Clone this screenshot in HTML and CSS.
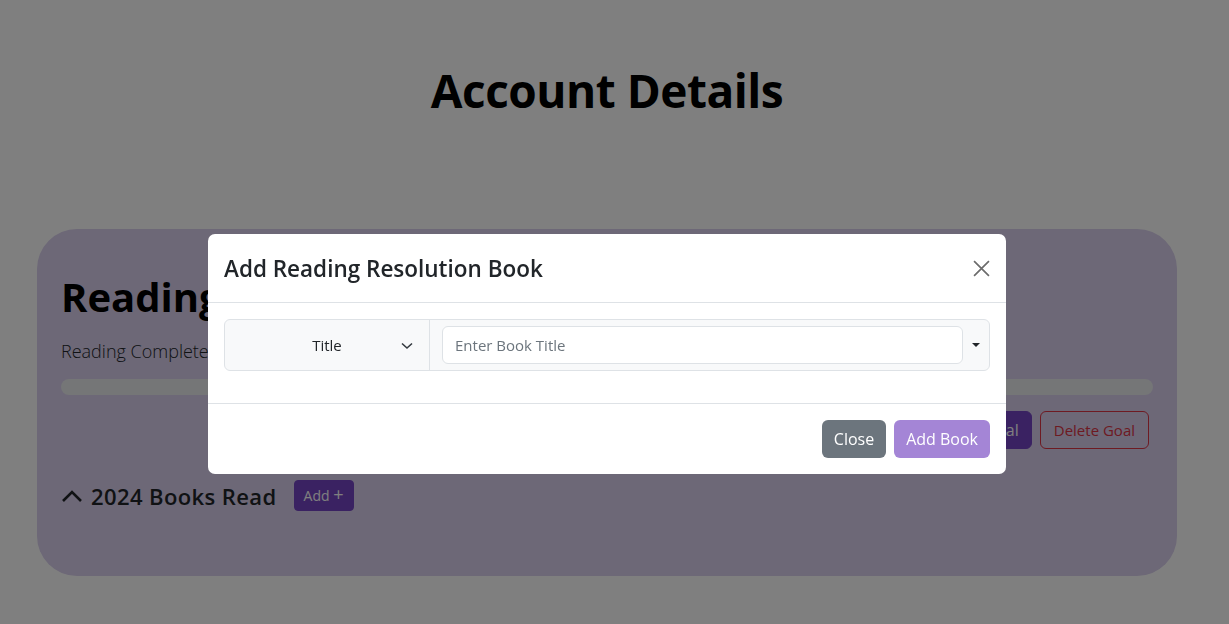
FILE: index.html
```html
<!DOCTYPE html>
<html lang="en">
<head>
<meta charset="utf-8">
<title>Account Details</title>
<link rel="stylesheet" href="styles.css">
</head>
<body class="modal-open">
<main class="page">
  <h1 class="page-title">Account Details</h1>
  <section class="goal-card">
    <h2 class="goal-title">Reading Resolution</h2>
    <p class="goal-sub">Reading Completed: 0 / 12 books</p>
    <div class="progress"><div class="progress-bar"></div></div>
    <div class="goal-actions">
      <button class="btn btn-purple">Edit Goal</button>
      <button class="btn btn-outline-danger">Delete Goal</button>
    </div>
    <div class="books-head">
      <svg class="chev-up" width="22" height="14" viewBox="0 0 22 14"><path d="M2 12 L11 3 L20 12" fill="none" stroke="#212529" stroke-width="2.6"/></svg>
      <h3 class="books-title">2024 Books Read</h3>
      <button class="btn btn-purple btn-sm">Add <span class="plus">+</span></button>
    </div>
  </section>
</main>
<div class="backdrop"></div>
<div class="modal">
  <div class="modal-header">
    <h4 class="modal-title">Add Reading Resolution Book</h4>
    <button class="btn-close" aria-label="Close">
      <svg width="17" height="17" viewBox="0 0 16 16"><path d="M1 1 L15 15 M15 1 L1 15" stroke="#6c6c6c" stroke-width="1.6" fill="none"/></svg>
    </button>
  </div>
  <div class="modal-body">
    <div class="input-group">
      <div class="select-part">
        <span class="select-label">Title</span>
        <svg class="select-chev" width="12" height="8" viewBox="0 0 12 8"><path d="M1 1.5 L6 6 L11 1.5" fill="none" stroke="#343a40" stroke-width="1.6"/></svg>
      </div>
      <div class="input-part">
        <input class="text-input" type="text" placeholder="Enter Book Title">
        <span class="caret"></span>
      </div>
    </div>
  </div>
  <div class="modal-footer">
    <button class="btn btn-secondary">Close</button>
    <button class="btn btn-add" disabled>Add Book</button>
  </div>
</div>
</body>
</html>
```

FILE: styles.css
```css
* { box-sizing: border-box; }
html, body { margin: 0; }
body {
  background: #fff;
  font-family: "Open Sans", "Noto Sans", "Liberation Sans", sans-serif;
  color: #212529;
  padding-right: 15px;
  height: 624px;
  overflow: hidden;
}
.page {
  max-width: 1140px;
  margin: 0 auto;
}
.page-title {
  margin: 0;
  padding-top: 58px;
  text-align: center;
  font-size: 46px;
  font-weight: 700;
  color: #000;
  line-height: 64px;
  letter-spacing: -0.5px;
}
.goal-card {
  margin-top: 107px;
  background: #dad0ee;
  border-radius: 40px;
  padding: 40px 24px 60px;
  height: 347px;
}
.goal-title {
  margin: 0;
  font-size: 40px;
  font-weight: 700;
  line-height: 56px;
  color: #000;
}
.goal-sub {
  margin: 12px 0 0;
  font-size: 18px;
  font-weight: 300;
  line-height: 28px;
}
.progress {
  margin-top: 14px;
  height: 16px;
  background: #eaecef;
  border-radius: 8px;
}
.goal-actions {
  display: flex;
  justify-content: flex-end;
  gap: 8px;
  margin-top: 16px;
  padding-right: 4px;
}
.btn {
  font-family: inherit;
  font-size: 16px;
  line-height: 24px;
  padding: 6px 12px;
  border-radius: 6px;
  border: 1px solid transparent;
  cursor: pointer;
}
.btn-purple { background: #7545c4; color: #fff; border-color: #7545c4; }
.btn-outline-danger { background: transparent; color: #dc3545; border-color: #dc3545; font-size: 15px; padding: 6px 13px; }
.books-head {
  display: flex;
  align-items: center;
  margin-top: 31px;
}
.chev-up { margin-right: 8px; }
.books-title {
  margin: 0;
  font-size: 22px;
  font-weight: 600;
  line-height: 30px;
  letter-spacing: 0.4px;
}
.btn-sm {
  margin-left: 17px;
  font-size: 14px;
  line-height: 20px;
  padding: 4px 9px;
  border-radius: 4px;
}
.plus { font-size: 18px; line-height: 18px; }
.backdrop {
  position: fixed;
  inset: 0;
  background: rgba(0, 0, 0, 0.5);
}
.modal {
  position: fixed;
  left: 208px;
  top: 234px;
  width: 798px;
  background: #fff;
  border-radius: 7px;
  overflow: hidden;
}
.modal-header {
  display: flex;
  align-items: center;
  justify-content: space-between;
  padding: 16px 16px;
  height: 69px;
  border-bottom: 1px solid #dee2e6;
}
.modal-title {
  margin: 0;
  font-size: 22.5px;
  font-weight: 600;
  line-height: 32px;
  padding-top: 2px;
}
.btn-close {
  background: none;
  border: 0;
  padding: 0;
  margin-right: 0;
  display: flex;
}
.modal-body {
  padding: 16px 16px 32px;
}
.input-group {
  display: flex;
  height: 52px;
  border: 1px solid #dee2e6;
  border-radius: 6px;
  background: #f8f9fa;
}
.select-part {
  width: 205px;
  border-right: 1px solid #dee2e6;
  display: flex;
  align-items: center;
  justify-content: center;
  position: relative;
}
.select-label { font-size: 15px; }
.select-chev { position: absolute; right: 16px; top: 22px; }
.input-part {
  flex: 1;
  display: flex;
  align-items: center;
  padding: 0 0 0 12px;
}
.text-input {
  flex: 1;
  height: 38px;
  border: 1px solid #dee2e6;
  border-radius: 6px;
  padding: 6px 12px;
  font-family: inherit;
  font-size: 15px;
  color: #212529;
  background: #fff;
}
.text-input::placeholder { color: #6c757d; }
.caret {
  width: 26px;
  display: flex;
  justify-content: center;
}
.caret::after {
  content: "";
  border-left: 4px solid transparent;
  border-right: 4px solid transparent;
  border-top: 4px solid #212529;
}
.modal-footer {
  display: flex;
  justify-content: flex-end;
  gap: 8px;
  padding: 16px 16px;
  border-top: 1px solid #dee2e6;
}
.btn-secondary { background: #6c757d; color: #fff; padding: 6px 11px; }
.btn-add { background: #a485d6; color: #fff; cursor: default; padding: 6px 11px; }
```
